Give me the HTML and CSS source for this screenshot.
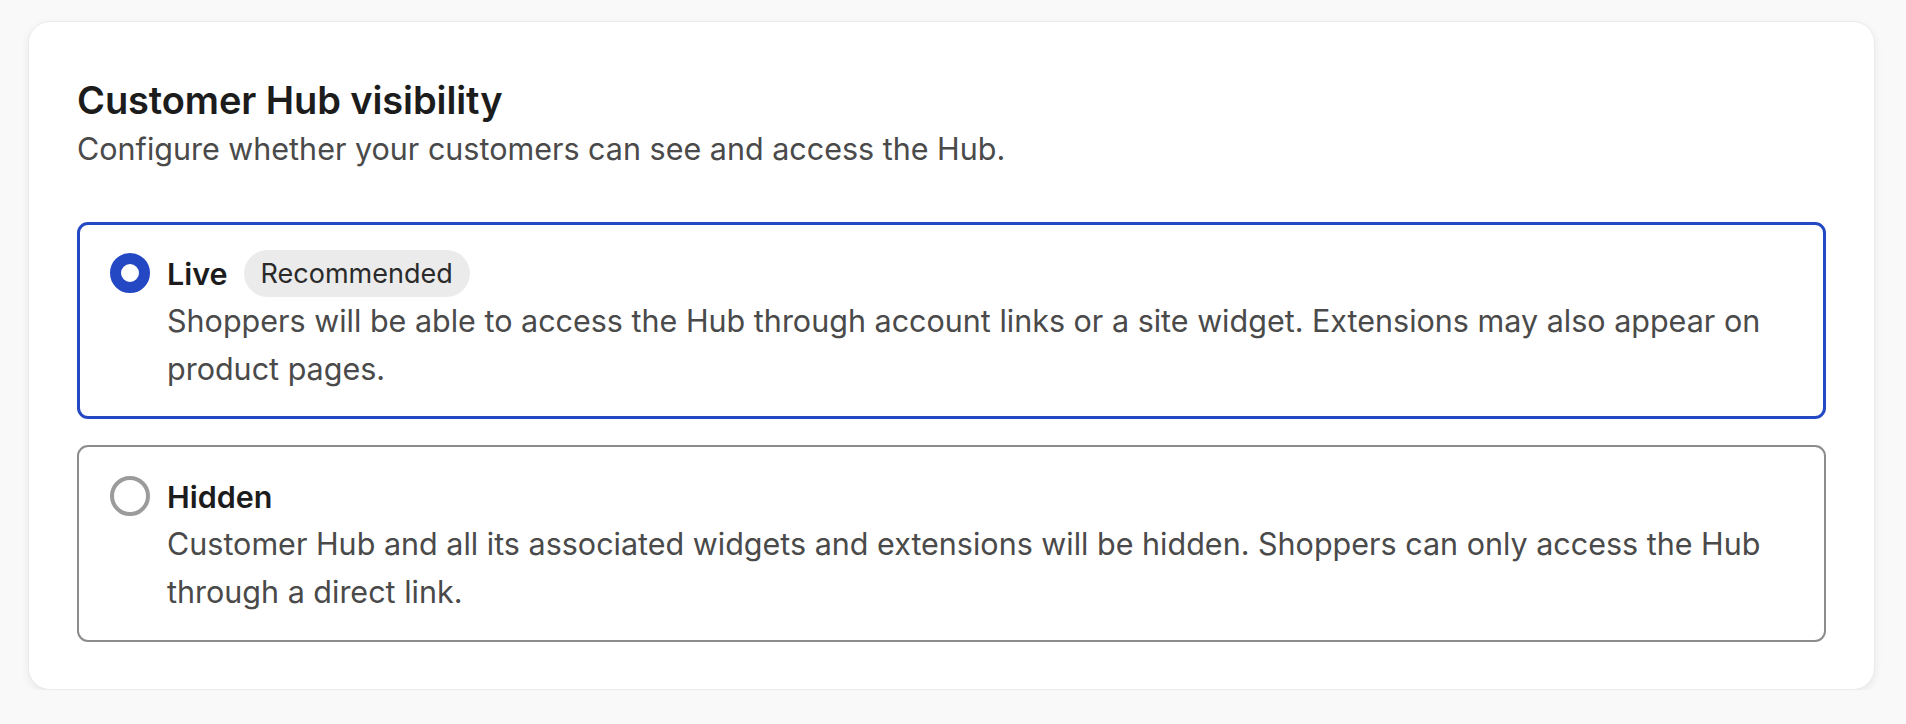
FILE: index.html
```html
<!DOCTYPE html>
<html lang="en">
<head>
<meta charset="utf-8">
<title>Customer Hub visibility</title>
<link rel="stylesheet" href="styles.css">
</head>
<body>
  <section class="card">
    <h2 class="card-title">Customer Hub visibility</h2>
    <p class="card-desc">Configure whether your customers can see and access the Hub.</p>
    <div class="options">
      <label class="option option-selected">
        <span class="radio radio-on"></span>
        <span class="option-body">
          <span class="option-head">
            <span class="option-label">Live</span>
            <span class="badge">Recommended</span>
          </span>
          <span class="option-text">Shoppers will be able to access the Hub through account links or a site widget. Extensions may also appear on product pages.</span>
        </span>
      </label>
      <label class="option">
        <span class="radio"></span>
        <span class="option-body">
          <span class="option-head">
            <span class="option-label">Hidden</span>
          </span>
          <span class="option-text">Customer Hub and all its associated widgets and extensions will be hidden. Shoppers can only access the Hub through a direct link.</span>
        </span>
      </label>
    </div>
  </section>
</body>
</html>
```

FILE: styles.css
```css
* { box-sizing: border-box; }

html, body {
  margin: 0;
  padding: 0;
  background: #f9f9f9;
}

body {
  font-family: "Inter", "Noto Sans", "Liberation Sans", sans-serif;
  padding: 21px 31px 0 28px;
}

.card {
  background: #ffffff;
  border: 1px solid #ebebeb;
  border-radius: 22px;
  box-shadow: 0 3px 8px rgba(0, 0, 0, 0.07);
  padding: 56px 48px 47px 48px;
}

.card-title {
  margin: 0;
  font-size: 38px;
  line-height: 44px;
  font-weight: 600;
  color: #1c1c1c;
  letter-spacing: -0.1px;
}

.card-desc {
  margin: 4px 0 0 0;
  font-size: 30.5px;
  line-height: 46px;
  color: #4a4a4a;
}

.options {
  margin-top: 50px;
  display: flex;
  flex-direction: column;
  gap: 26px;
}

.option {
  display: flex;
  align-items: flex-start;
  gap: 17px;
  border: 2px solid #8c8c8c;
  border-radius: 11px;
  padding: 26px 30px 24px 31px;
}

.option-selected {
  border: 3px solid #2448c4;
  padding: 25px 29px 23px 30px;
}

.radio {
  flex: none;
  width: 40px;
  height: 40px;
  margin-top: 3px;
  border-radius: 50%;
  border: 4px solid #9b9b9b;
  background: #fff;
}

.radio-on {
  border: 11px solid #2448c4;
}

.option-body {
  display: flex;
  flex-direction: column;
}

.option-head {
  display: flex;
  align-items: center;
  gap: 16px;
  height: 47px;
}

.option-label {
  font-size: 30.5px;
  font-weight: 600;
  color: #1c1c1c;
  line-height: 47px;
}

.badge {
  display: inline-flex;
  align-items: center;
  height: 47px;
  padding: 0 17px;
  border-radius: 24px;
  background: #ebebeb;
  font-size: 27px;
  color: #2a2a2a;
}

.option-text {
  font-size: 30.5px;
  line-height: 48px;
  color: #4a4a4a;
}
```
